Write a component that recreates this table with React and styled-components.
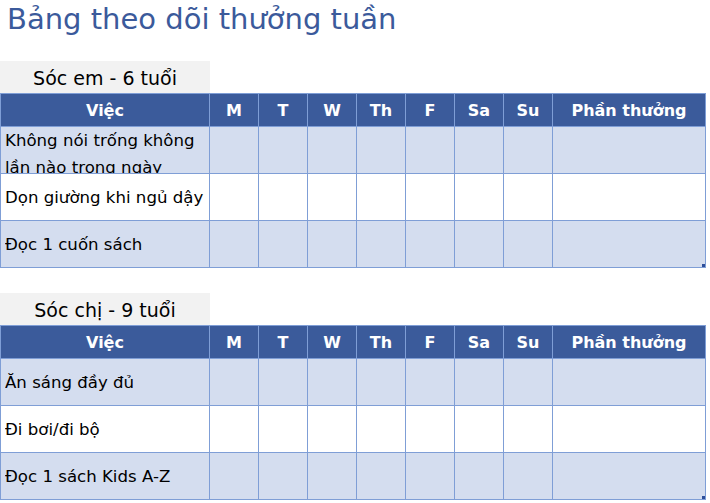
import React from 'react';
import styled, { createGlobalStyle } from 'styled-components';

const days = ['M', 'T', 'W', 'Th', 'F', 'Sa', 'Su'];

const charts = [
  {
    name: 'Sóc em - 6 tuổi',
    tasks: ['Không nói trống không lần nào trong ngày', 'Dọn giường khi ngủ dậy', 'Đọc 1 cuốn sách'],
  },
  {
    name: 'Sóc chị - 9 tuổi',
    tasks: ['Ăn sáng đầy đủ', 'Đi bơi/đi bộ', 'Đọc 1 sách Kids A-Z'],
  },
];

export default function App() {
  return (
    <Page>
      <GlobalStyle />
      <Title>Bảng theo dõi thưởng tuần</Title>
      {charts.map((chart) => (
        <Section key={chart.name}>
          <Label>{chart.name}</Label>
          <TableWrap>
            <Table>
              <colgroup>
                <col style={{ width: 209 }} />
                {days.map((d) => (
                  <col key={d} style={{ width: 49 }} />
                ))}
                <col style={{ width: 153 }} />
              </colgroup>
              <thead>
                <tr>
                  <Head>Việc</Head>
                  {days.map((d) => (
                    <Head key={d}>{d}</Head>
                  ))}
                  <Head>Phần thưởng</Head>
                </tr>
              </thead>
              <tbody>
                {chart.tasks.map((task, i) => (
                  <Row key={task} $banded={i % 2 === 0}>
                    <Cell>
                      <TaskText>{task}</TaskText>
                    </Cell>
                    {days.map((d) => (
                      <Cell key={d} />
                    ))}
                    <Cell />
                  </Row>
                ))}
              </tbody>
            </Table>
            <Handle />
          </TableWrap>
        </Section>
      ))}
    </Page>
  );
}

const GlobalStyle = createGlobalStyle`
  body {
    margin: 0;
    background: #fff;
    font-family: "Comic Sans MS", "DejaVu Sans", sans-serif;
  }
`;

const Page = styled.div`
  width: 710px;
  height: 503px;
  overflow: hidden;
`;

const Title = styled.h1`
  margin: 0;
  height: 61px;
  padding: 0 0 0 7px;
  font-size: 29px;
  font-weight: normal;
  line-height: 38px;
  color: #3b5a9b;
`;

const Section = styled.div`
  margin-bottom: 25px;
`;

const Label = styled.div`
  width: 210px;
  height: 32px;
  background: #f2f2f2;
  font-size: 19px;
  line-height: 34px;
  text-align: center;
  color: #000;
`;

const TableWrap = styled.div`
  position: relative;
  width: 706px;
`;

const Table = styled.table`
  width: 706px;
  table-layout: fixed;
  border-collapse: collapse;
`;

const Head = styled.th`
  height: 32px;
  padding: 0;
  background: #3b5b9b;
  border: 1px solid #7f9ed6;
  color: #fff;
  font-size: 16px;
  font-weight: bold;
  text-align: center;
`;

const Row = styled.tr`
  background: ${(p) => (p.$banded ? '#d4ddef' : '#fff')};
`;

const Cell = styled.td`
  height: 46px;
  padding: 0 0 0 4px;
  border: 1px solid #7f9ed6;
  vertical-align: middle;
`;

const TaskText = styled.div`
  max-height: 46px;
  overflow: hidden;
  font-size: 16.6px;
  line-height: 27px;
  color: #000;
`;

const Handle = styled.span`
  position: absolute;
  right: 1px;
  bottom: 1px;
  width: 3px;
  height: 3px;
  background: #2e4f9a;
`;
